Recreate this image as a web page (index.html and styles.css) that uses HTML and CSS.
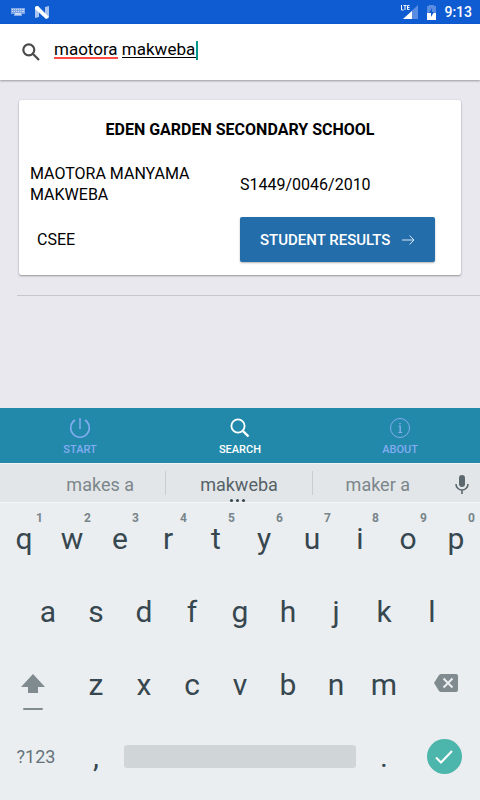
FILE: index.html
```html
<!DOCTYPE html>
<html lang="en">
<head>
<meta charset="utf-8">
<meta name="viewport" content="width=device-width, initial-scale=1">
<title>Search</title>
<link rel="stylesheet" href="styles.css">
</head>
<body>
<div class="screen">
  <div class="status">
    <svg width="14" height="8" viewBox="0 0 14 8" fill="#c7d8f5"><path d="M0 0h14v6h-3v2H3V6H0z" fill="#7ea5e7"/><path d="M1 1h1v1H1zM3 1h1v1H3zM5 1h1v1H5zM7 1h1v1H7zM9 1h1v1H9zM11 1h2v1h-2zM1 3h1v1H1zM3 3h1v1H3zM5 3h1v1H5zM7 3h1v1H7zM9 3h1v1H9zM11 3h2v1h-2zM4 5h6v2H4z"/></svg>
    <svg class="status-n" width="14" height="13" viewBox="0 0 14 13"><path d="M0 2l4-2v11l-4 1zM10 1l4-1v11l-4 2z" fill="#a9c4f0"/><path d="M0 1q2-2 4 0l10 10q-2 3-4 1L0 3z" fill="#fff"/></svg>
    <svg class="status-signal" width="19" height="16" viewBox="0 0 19 16"><path d="M18 1v14H3z" fill="#5a8de2"/><path d="M12 7v8H3z" fill="#fff"/><path d="M1.500 1v5h2M3.500 1.500h3M5 1.500V6M9.500 1.500h-2v4h2M7.500 3.500h2" fill="none" stroke="#fff"/></svg>
    <svg width="9" height="15" viewBox="0 0 9 15"><path d="M2 0h5v1h2v7H0V1h2z" fill="#5a8de2"/><path d="M0 8h9v7H0z" fill="#fff"/><path d="M5 3L2 8h2v4l3-5H5z" fill="#0f5bd2"/></svg>
    <span class="clock">9:13</span>
  </div>
  <header class="searchbar">
    <svg width="18" height="18" viewBox="0 0 18 18" fill="none" stroke="#4a4a4a" stroke-width="2.200"><circle cx="6.800" cy="6.800" r="5.500"/><path d="M10.800 10.800L17 17"/></svg>
    <div class="field">
      <input type="text" aria-label="Search" value="maotora makweba">
      <i class="mark misspelt"></i><i class="mark composing"></i><i class="caret"></i>
    </div>
  </header>
  <main>
    <article class="card">
      <h2>EDEN GARDEN SECONDARY SCHOOL</h2>
      <div class="details">
        <p>MAOTORA MANYAMA MAKWEBA</p>
        <p>S1449/0046/2010</p>
        <p class="exam">CSEE</p>
        <button class="results">STUDENT RESULTS
          <svg width="14" height="12" viewBox="0 0 14 12" fill="none" stroke="#d6e5f2"><path d="M1 6h12M8.500 1.500L13 6l-4.500 4.500"/></svg>
        </button>
      </div>
    </article>
    <hr>
  </main>
  <nav>
    <a href="#start"><svg width="22" height="22" viewBox="0 0 22 22" fill="none" stroke="currentColor" stroke-width="1.500"><path d="M11 1v11M6 3a9.300 9.300 0 1 0 10 0"/></svg>START</a>
    <a href="#search" class="active"><svg width="22" height="22" viewBox="0 0 22 22" fill="none" stroke="currentColor" stroke-width="1.800"><circle cx="9" cy="9" r="6.600"/><path d="M13.800 13.800l5.700 5.700" stroke-width="2.400"/></svg>SEARCH</a>
    <a href="#about"><svg width="22" height="22" viewBox="0 0 22 22" fill="none" stroke="currentColor"><circle cx="11" cy="11" r="9.500"/><path d="M9.500 9.200h1.700" /><path d="M11.200 8.700V15.500" stroke-width="1.400"/><path d="M9.300 15.500h3.800"/><circle cx="11" cy="6.700" r=".5" fill="currentColor"/></svg>ABOUT</a>
  </nav>
  <section class="keyboard" aria-label="Keyboard">
    <div class="suggestions">
      <button>makes a</button>
      <button class="best">makweba<i class="more"></i></button>
      <button>maker a</button>
      <button class="mic" aria-label="Voice input"><svg width="14" height="20" viewBox="0 0 14 20"><rect x="4" y="0" width="6" height="12" rx="3" fill="#5b686d"/><path d="M1 9a6 6 0 0 0 12 0M7 15v4" fill="none" stroke="#5b686d" stroke-width="1.600"/></svg></button>
    </div>
    <div class="row">
      <button>q<small>1</small></button><button>w<small>2</small></button><button>e<small>3</small></button><button>r<small>4</small></button><button>t<small>5</small></button><button>y<small>6</small></button><button>u<small>7</small></button><button>i<small>8</small></button><button>o<small>9</small></button><button>p<small>0</small></button>
    </div>
    <div class="row middle">
      <button>a</button><button>s</button><button>d</button><button>f</button><button>g</button><button>h</button><button>j</button><button>k</button><button>l</button>
    </div>
    <div class="row">
      <button class="wide shift" aria-label="Shift"><svg width="24" height="38" viewBox="0 0 24 38" fill="#808b8f"><path d="M12 1l12 13h-7v6H7v-6H0z"/><rect x="2" y="35" width="20" height="2" rx="1"/></svg></button>
      <button>z</button><button>x</button><button>c</button><button>v</button><button>b</button><button>n</button><button>m</button>
      <button class="wide delete" aria-label="Delete"><svg width="24" height="18" viewBox="0 0 24 18"><path d="M7 0h15q2 0 2 2v14q0 2-2 2H7q-1 0-2-1L0 9l5-8q1-1 2-1z" fill="#808b8f"/><path d="M9.500 4.500l9 9M18.500 4.500l-9 9" stroke="#ebeef1" stroke-width="2"/></svg></button>
    </div>
    <div class="row bottom">
      <button class="wide symbols">?123</button>
      <button>,</button>
      <button class="space" aria-label="Space"></button>
      <button>.</button>
      <button class="wide" aria-label="Done"><span class="done"><svg width="18" height="14" viewBox="0 0 18 14" fill="none" stroke="#fff" stroke-width="2"><path d="M1 7.500l5 5L17 1"/></svg></span></button>
    </div>
  </section>
</div>
</body>
</html>
```
FILE: styles.css
```css
* { box-sizing: border-box; }
body { margin: 0; font-family: Roboto, sans-serif; color: #000; background: #e9e8ee; }
svg { display: block; flex: none; }
button { border: 0; margin: 0; padding: 0; background: none; font: inherit; color: inherit; }
input:focus { outline: none; }
.screen { min-height: 100vh; display: flex; flex-direction: column; }

.status { height: 24px; padding: 0 8px 0 11px; display: flex; align-items: center; background: #0f5bd2; color: #fff; }
.status-n { margin-left: 10px; }
.status-signal { margin-left: auto; margin-right: 8px; }
.clock { margin-left: 8px; font-size: 14px; font-weight: 500; }

.searchbar { height: 56px; padding: 0 22px; display: flex; align-items: center; gap: 14px; background: #fff; box-shadow: 0 1px 2px rgba(0, 0, 0, .35); }
.field { position: relative; flex: 1; padding-bottom: 6px; }
.field input { display: block; width: 100%; height: 24px; padding: 0; border: 0; background: none; font: 17px/24px Roboto, sans-serif; color: #000; }
.mark, .caret { position: absolute; }
.mark { top: 20px; height: 2px; }
.misspelt { left: 0; width: 64px; background: #ff4b42; }
.composing { left: 68px; width: 74px; height: 1px; background: #000; }
.caret { left: 142px; top: 4px; width: 2px; height: 19px; background: #00978a; }

main { flex: 1; }
.card { margin: 20px 19px; padding: 19px 11px 13px; background: #fff; border-radius: 2px; box-shadow: 0 1px 2px rgba(0, 0, 0, .35), 0 0 1px rgba(0, 0, 0, .2); }
h2 { margin: 0 0 23px; font-size: 16px; line-height: 21px; font-weight: 700; text-align: center; }
.details { display: grid; grid-template-columns: 1fr 1fr; align-items: center; row-gap: 12px; }
.details p { margin: 0; font-size: 16px; line-height: 21px; }
.details .exam { padding-left: 7px; }
.results { justify-self: start; height: 45px; padding: 0 20px; display: flex; align-items: center; gap: 11px; border-radius: 2px; background: #246dab; color: #fff; font-size: 15px; font-weight: 500; box-shadow: 0 1px 2px rgba(0, 0, 0, .3); }
hr { height: 1px; margin: 0 0 0 17px; border: 0; background: #c8c7cc; }

nav { height: 55px; display: flex; background: #2289ab; }
nav a { flex: 1; display: flex; flex-direction: column; align-items: center; padding-top: 9px; gap: 4px; color: #84acf2; font-size: 11px; line-height: 14px; font-weight: 500; text-decoration: none; }
nav a.active { color: #fff; }

.keyboard { background: #ebeef1; color: #37474f; padding-bottom: 5px; }
.suggestions { height: 40px; padding-left: 35px; display: flex; align-items: center; background: #e3e6e8; border-top: 1px solid #f1f3f4; border-bottom: 1px solid #f4f6f7; color: #7b868b; font-size: 18px; }
.suggestions button { flex: 131; height: 24px; padding-top: 4px; line-height: 24px; position: relative; display: flex; align-items: center; justify-content: center; }
.suggestions .best { flex: 146; color: #556268; border: solid #c9cdd0; border-width: 0 1px; }
.more { position: absolute; left: 50%; bottom: -7px; width: 3px; height: 3px; margin-left: -3px; border-radius: 50%; background: #37474f; box-shadow: -6px 0 #37474f, 6px 0 #37474f; }
.suggestions .mic { flex: none; width: 37px; }
.row { height: 73px; padding-bottom: 2px; display: flex; }
.row button { position: relative; flex: 48; min-width: 0; display: flex; align-items: center; justify-content: center; font-size: 30px; }
.row small { position: absolute; top: 8px; right: 5px; font-size: 12px; line-height: 14px; font-weight: 700; color: #78858a; }
.middle { padding-left: 5%; padding-right: 5%; }
.bottom { padding-bottom: 4px; }
.row .wide { flex: 72; }
.shift svg { margin: 14px 6px 0 0; }
.delete svg { margin: 0 0 3px 4px; }
.row .symbols { font-size: 18px; color: #65737a; }
.row .space { flex: 240; }
.space::before { content: ""; flex: 1; height: 23px; margin: 0 4px; border-radius: 3px; background: #d0d5d8; }
.done { width: 35px; height: 35px; border-radius: 50%; display: flex; align-items: center; justify-content: center; background: #4db6ac; }
```
